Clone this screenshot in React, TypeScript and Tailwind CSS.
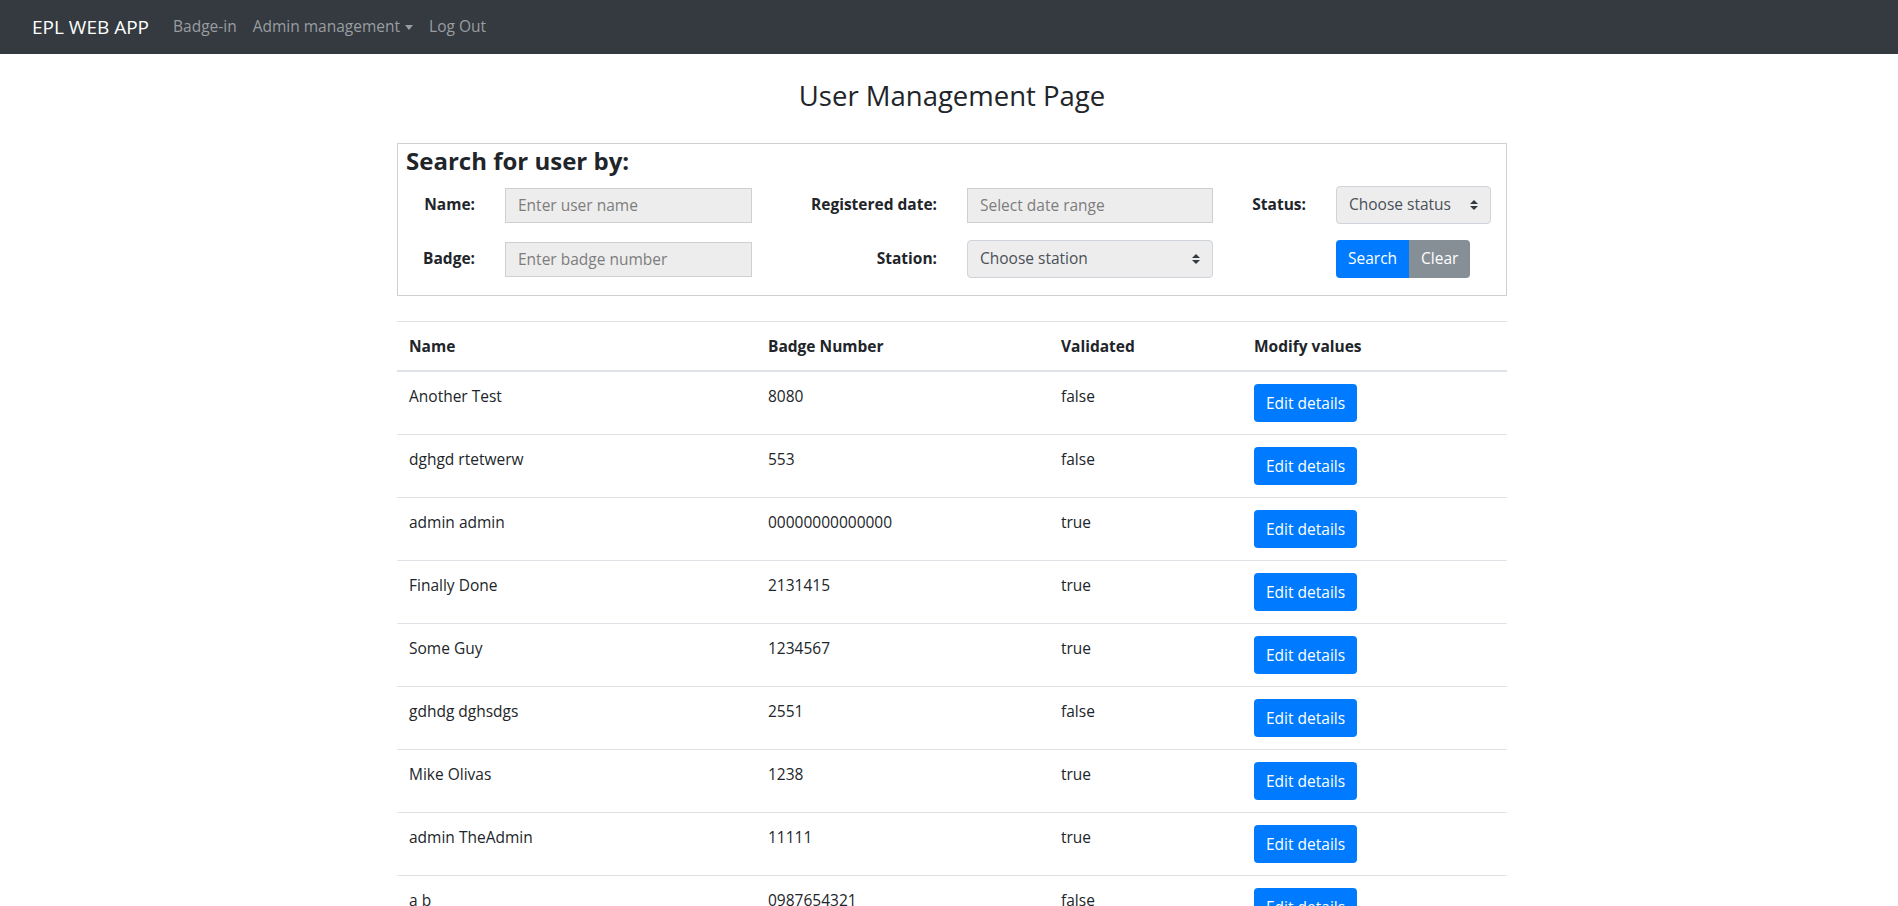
import React from 'react';

const users = [
  { name: 'Another Test', badge: '8080', validated: 'false' },
  { name: 'dghgd rtetwerw', badge: '553', validated: 'false' },
  { name: 'admin admin', badge: '00000000000000', validated: 'true' },
  { name: 'Finally Done', badge: '2131415', validated: 'true' },
  { name: 'Some Guy', badge: '1234567', validated: 'true' },
  { name: 'gdhdg dghsdgs', badge: '2551', validated: 'false' },
  { name: 'Mike Olivas', badge: '1238', validated: 'true' },
  { name: 'admin TheAdmin', badge: '11111', validated: 'true' },
  { name: 'a b', badge: '0987654321', validated: 'false' },
  { name: 'test user', badge: '4242', validated: 'false' },
];

function Carets() {
  return (
    <svg width="8" height="10" viewBox="0 0 4 5" className="shrink-0">
      <path fill="#343a40" d="M2 0L0 2h4zm0 5L0 3h4z" />
    </svg>
  );
}

function Select({ label }: { label: string }) {
  return (
    <div className="flex h-[38px] items-center justify-between rounded-[4px] border border-[#ced4da] bg-[#ededed] px-3 text-[15.5px] text-[#495057]">
      <span>{label}</span>
      <Carets />
    </div>
  );
}

function Field({ placeholder }: { placeholder: string }) {
  return (
    <input
      placeholder={placeholder}
      className="h-[35px] w-full border border-[#cfcfcf] bg-[#ededed] px-3 text-[15.5px] text-[#495057] outline-none placeholder:text-[#7d7d7d]"
    />
  );
}

function Label({ children }: { children: React.ReactNode }) {
  return <label className="pr-[30px] text-right text-[15.5px] font-bold text-[#212529]">{children}</label>;
}

export default function App() {
  return (
    <div className="min-h-screen bg-white font-['Segoe_UI','Open_Sans',sans-serif] text-[#212529]">
      {/* Navbar */}
      <nav className="flex h-[54px] items-center bg-[#343a40] px-[32px]">
        <span className="mr-4 text-[19px] text-white">EPL WEB APP</span>
        <div className="flex items-center text-[15.5px] text-[#9a9da0]">
          <a className="px-2">Badge-in</a>
          <a className="flex items-center px-2">
            Admin management
            <span className="ml-[5px] inline-block h-0 w-0 border-x-[4.5px] border-t-[5px] border-x-transparent border-t-[#9a9da0]" />
          </a>
          <a className="px-2">Log Out</a>
        </div>
      </nav>

      <div className="mx-auto w-[1116px] pl-[6px]">
        <h3 className="pt-[25px] text-center text-[27.5px] leading-[34px] font-medium">User Management Page</h3>

        {/* Search box */}
        <div className="mt-[30px] border border-[#d0d0d0] px-2 pt-[2px] pb-[17px]">
          <h4 className="text-[24px] leading-[29px] font-bold">Search for user by:</h4>
          <div className="-ml-2 mt-[11px] grid grid-cols-[107px_247px_215px_246px_123px_155px] items-center gap-y-[16px]">
            <Label>Name:</Label>
            <Field placeholder="Enter user name" />
            <Label>Registered date:</Label>
            <Field placeholder="Select date range" />
            <Label>Status:</Label>
            <Select label="Choose status" />

            <Label>Badge:</Label>
            <Field placeholder="Enter badge number" />
            <Label>Station:</Label>
            <Select label="Choose station" />
            <span />
            <div className="flex">
              <button className="h-[38px] rounded-l-[4px] bg-[#007bff] px-3 text-[15.5px] text-white">Search</button>
              <button className="h-[38px] rounded-r-[4px] bg-[#868e96] px-3 text-[15.5px] text-white">Clear</button>
            </div>
          </div>
        </div>

        {/* Users table */}
        <table className="mt-[25px] w-full table-fixed border-collapse text-[15.5px]">
          <colgroup>
            <col className="w-[359px]" />
            <col className="w-[293px]" />
            <col className="w-[193px]" />
            <col className="w-[265px]" />
          </colgroup>
          <thead>
            <tr className="border-t border-b-2 border-[#dee2e6]">
              <th className="p-3 text-left font-bold leading-6">Name</th>
              <th className="p-3 text-left font-bold leading-6">Badge Number</th>
              <th className="p-3 text-left font-bold leading-6">Validated</th>
              <th className="p-3 text-left font-bold leading-6">Modify values</th>
            </tr>
          </thead>
          <tbody>
            {users.map((u) => (
              <tr key={u.name} className="border-b border-[#dee2e6]">
                <td className="p-3 align-top leading-6">{u.name}</td>
                <td className="p-3 align-top leading-6">{u.badge}</td>
                <td className="p-3 align-top leading-6">{u.validated}</td>
                <td className="p-3 align-top leading-6">
                  <button className="h-[38px] rounded-[4px] bg-[#007bff] px-3 text-[15.5px] text-white">Edit details</button>
                </td>
              </tr>
            ))}
          </tbody>
        </table>
      </div>
    </div>
  );
}
